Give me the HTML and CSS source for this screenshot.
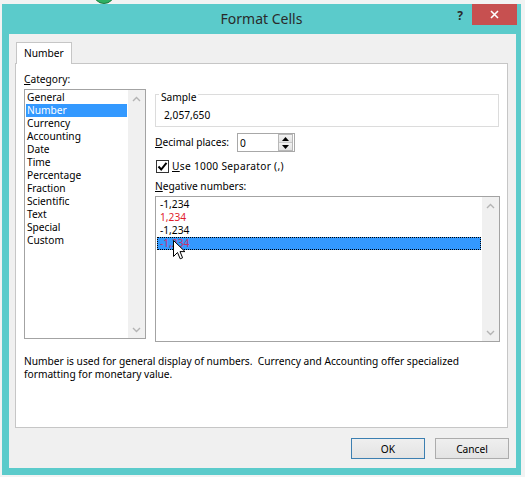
FILE: index.html
```html
<!DOCTYPE html>
<html>
<head>
<meta charset="utf-8">
<title>Format Cells</title>
<link rel="stylesheet" href="styles.css">
</head>
<body>
<div class="app-icon"></div>
<div class="dialog">
  <div class="titlebar">
    <span class="title">Format Cells</span>
    <span class="help">?</span>
    <div class="close">
      <svg width="9" height="9" viewBox="0 0 9 9"><path d="M1 1 L8 8 M8 1 L1 8" stroke="#fff" stroke-width="1.6" fill="none"/></svg>
    </div>
  </div>
  <div class="client">
    <div class="tab">Number</div>
    <div class="panel">
      <div class="cols">
        <div class="col">
          <div class="label"><u>C</u>ategory:</div>
          <div class="listbox cat-list">
            <div class="items">
              <div class="item">General</div>
              <div class="item sel">Number</div>
              <div class="item">Currency</div>
              <div class="item">Accounting</div>
              <div class="item">Date</div>
              <div class="item">Time</div>
              <div class="item">Percentage</div>
              <div class="item">Fraction</div>
              <div class="item">Scientific</div>
              <div class="item">Text</div>
              <div class="item">Special</div>
              <div class="item">Custom</div>
            </div>
            <div class="scroll">
              <div class="arrow"><svg width="9" height="6" viewBox="0 0 9 6"><polyline points="1,5 4.5,1.5 8,5" stroke="#b4b4b4" stroke-width="1.4" fill="none"/></svg></div>
              <div class="arrow"><svg width="9" height="6" viewBox="0 0 9 6"><polyline points="1,1 4.5,4.5 8,1" stroke="#b4b4b4" stroke-width="1.4" fill="none"/></svg></div>
            </div>
          </div>
        </div>
        <div class="col">
          <fieldset class="sample">
            <legend>Sample</legend>
            <div class="sample-value">2,057,650</div>
          </fieldset>
          <div class="row decimal">
            <span class="row-label"><u>D</u>ecimal places:</span>
            <div class="num-input">
              <span class="num-value">0</span>
              <div class="spin">
                <div class="spin-btn"><svg width="7" height="4" viewBox="0 0 7 4"><polygon points="0,4 3.5,0 7,4" fill="#000"/></svg></div>
                <div class="spin-btn"><svg width="7" height="4" viewBox="0 0 7 4"><polygon points="0,0 3.5,4 7,0" fill="#000"/></svg></div>
              </div>
            </div>
          </div>
          <div class="row check-row">
            <span class="checkbox"><svg width="11" height="11" viewBox="0 0 11 11"><polyline points="1.5,5.5 4.2,8.5 9.5,1.8" stroke="#000" stroke-width="2" fill="none"/></svg></span>
            <span class="check-label"><u>U</u>se 1000 Separator (,)</span>
          </div>
          <div class="label neg-label"><u>N</u>egative numbers:</div>
          <div class="listbox neg-list">
            <div class="items">
              <div class="item neg">-1,234</div>
              <div class="item neg red">1,234</div>
              <div class="item neg">-1,234</div>
              <div class="item neg sel focus">-1,234</div>
            </div>
            <div class="scroll">
              <div class="arrow"><svg width="9" height="6" viewBox="0 0 9 6"><polyline points="1,5 4.5,1.5 8,5" stroke="#b4b4b4" stroke-width="1.4" fill="none"/></svg></div>
              <div class="arrow"><svg width="9" height="6" viewBox="0 0 9 6"><polyline points="1,1 4.5,4.5 8,1" stroke="#b4b4b4" stroke-width="1.4" fill="none"/></svg></div>
            </div>
          </div>
        </div>
      </div>
      <p class="desc">Number is used for general display of numbers.&nbsp; Currency and Accounting offer specialized<br>formatting for monetary value.</p>
    </div>
    <div class="buttons">
      <button class="btn default">OK</button>
      <button class="btn">Cancel</button>
    </div>
  </div>
</div>
<svg class="cursor" width="13" height="20" viewBox="0 0 13 20"><path d="M0.5 0.5 L0.5 16.5 L4.5 12.5 L7.2 18.8 L9.6 17.8 L7 11.6 L12 11.6 Z" fill="#fff" stroke="#000" stroke-width="1"/></svg>
</body>
</html>
```
FILE: styles.css
```css
body {
  margin: 0;
  width: 525px;
  height: 477px;
  overflow: hidden;
  position: relative;
  background: #f2f3f3;
  font-family: "Noto Sans", "Liberation Sans", sans-serif;
  font-size: 10.2px;
  color: #000;
}

.app-icon {
  position: absolute;
  left: 93px;
  top: -18px;
  width: 20px;
  height: 20px;
  border-radius: 50%;
  background: #2fb062;
  border: 1px solid #1a7a3c;
}

.dialog {
  margin: 4px 0 0 2px;
  width: 519px;
  height: 471px;
  background: #5bcbcb;
  display: flex;
  flex-direction: column;
  position: relative;
}

.titlebar {
  height: 30px;
  position: relative;
  text-align: center;
  line-height: 30px;
  font-size: 14px;
  color: #2a2a2a;
}

.help {
  position: absolute;
  right: 58px;
  top: 0;
  font-weight: bold;
  font-size: 12px;
  line-height: 24px;
  color: #2a2a2a;
}

.close {
  position: absolute;
  top: 0;
  right: 4px;
  width: 45px;
  height: 21px;
  background: #c75050;
  display: flex;
  align-items: center;
  justify-content: center;
}

.client {
  flex: 1;
  margin: 0 5px 7px 7px;
  background: #f0f0f0;
  padding: 8px 7px 0 6px;
  display: flex;
  flex-direction: column;
}

.tab {
  margin-left: 1px;
  width: 56px;
  height: 22px;
  box-sizing: border-box;
  border: 1px solid #c6c6c6;
  border-bottom: none;
  background: #fff;
  padding-left: 7px;
  line-height: 20px;
  position: relative;
  z-index: 1;
  margin-bottom: -1px;
}

.panel {
  width: 493px;
  height: 365px;
  box-sizing: border-box;
  border: 1px solid #c6c6c6;
  background: #fff;
  padding: 9px 0 0 8px;
}

.cols {
  display: grid;
  grid-template-columns: 122px 345px;
  column-gap: 9px;
  align-items: start;
}

.col {
  display: flex;
  flex-direction: column;
}

.label {
  line-height: 13px;
  height: 13px;
}

.listbox {
  border: 1px solid #a3a3a3;
  box-sizing: border-box;
  display: flex;
  background: #fff;
}

.cat-list {
  margin-top: 3px;
  height: 250px;
}

.neg-list {
  margin-top: 3px;
  height: 146px;
}

.items {
  flex: 1;
  padding: 1px;
  min-width: 0;
}

.item {
  line-height: 13px;
  height: 13px;
  padding-left: 1px;
  white-space: nowrap;
  box-sizing: border-box;
}

.item.neg {
  padding-left: 3px;
}

.item.red {
  color: #e0202a;
}

.item.sel {
  background: #3399ff;
  color: #fff;
}

.item.sel.focus {
  color: #c8306a;
  outline: 1px dotted #000;
  outline-offset: -1px;
}

.scroll {
  width: 17px;
  background: #f0f0f0;
  display: flex;
  flex-direction: column;
  justify-content: space-between;
}

.arrow {
  height: 17px;
  display: flex;
  align-items: center;
  justify-content: center;
}

.sample {
  margin: 12px 0 0 0;
  border: 1px solid #dcdcdc;
  padding: 0 8px 4px 8px;
  min-width: 0;
  width: 344px;
  box-sizing: border-box;
}

.sample legend {
  padding: 6px 2px 0 2px;
  margin-left: -5px;
  line-height: 13px;
}

.sample-value {
  margin-top: 5px;
  line-height: 13px;
}

.row {
  display: flex;
  align-items: center;
}

.decimal {
  margin-top: 6px;
  height: 19px;
}

.row-label {
  width: 82px;
  line-height: 13px;
}

.num-input {
  width: 58px;
  height: 19px;
  box-sizing: border-box;
  border: 1px solid #a8a8a8;
  background: #fff;
  display: flex;
  align-items: center;
}

.num-value {
  padding-left: 2px;
  flex: 1;
}

.spin {
  width: 15px;
  height: 17px;
  box-sizing: border-box;
  border: 1px solid #b8b8b8;
  margin-right: 1px;
  display: flex;
  flex-direction: column;
}

.spin-btn {
  flex: 1;
  background: linear-gradient(#f2f2f2, #e2e2e2);
  display: flex;
  align-items: center;
  justify-content: center;
}

.spin-btn + .spin-btn {
  border-top: 1px solid #c8c8c8;
}

.check-row {
  margin-top: 8px;
  height: 13px;
}

.checkbox {
  width: 13px;
  height: 13px;
  box-sizing: border-box;
  border: 1px solid #333;
  background: #fff;
  margin-left: 1px;
  display: flex;
  align-items: center;
  justify-content: center;
}

.check-label {
  margin-left: 3px;
  line-height: 13px;
  letter-spacing: 0.3px;
}

.neg-label {
  margin-top: 7px;
}

.desc {
  margin: 13px 0 0 0;
  line-height: 13px;
}

.buttons {
  margin-top: 10px;
  display: flex;
  justify-content: flex-end;
  gap: 10px;
}

.btn {
  width: 74px;
  height: 21px;
  box-sizing: border-box;
  border: 1px solid #acacac;
  background: linear-gradient(#efefef, #e3e3e3);
  font-family: "Noto Sans", "Liberation Sans", sans-serif;
  font-size: 10.2px;
  color: #000;
  padding: 0;
}

.btn.default {
  border-color: #3c7fb1;
}

.cursor {
  position: absolute;
  left: 173px;
  top: 240px;
}
```
